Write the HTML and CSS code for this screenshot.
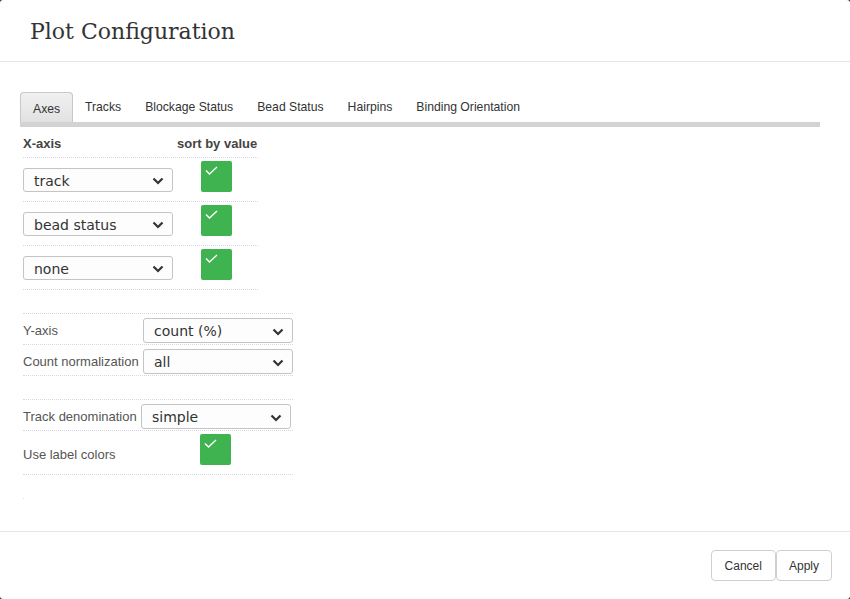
FILE: index.html
```html
<!DOCTYPE html>
<html>
<head>
<meta charset="utf-8">
<link rel="stylesheet" href="styles.css">
</head>
<body>
<div class="modal">
  <div class="modal-header"><h4 class="title">Plot Configuration</h4></div>
  <div class="modal-body">
    <div class="tabs">
      <div class="tab active">Axes</div>
      <div class="tab">Tracks</div>
      <div class="tab">Blockage Status</div>
      <div class="tab">Bead Status</div>
      <div class="tab">Hairpins</div>
      <div class="tab">Binding Orientation</div>
    </div>
    <div class="tabbar"></div>

    <div class="xtable">
      <div class="xrow head"><div class="c1">X-axis</div><div class="c2">sort by value</div></div>
      <div class="xrow">
        <div class="c1"><div class="select">track<svg class="chev" width="12" height="8" viewBox="0 0 12 8"><path d="M1.5 1.5 L6 6 L10.5 1.5" fill="none" stroke="#333" stroke-width="2.2"/></svg></div></div>
        <div class="c2 cbcell"><div class="cb"><svg width="14" height="9" viewBox="0 0 14 9"><path d="M1 4.5 L4.5 8 L12 1" fill="none" stroke="#fff" stroke-width="1.4"/></svg></div></div>
      </div>
      <div class="xrow">
        <div class="c1"><div class="select">bead status<svg class="chev" width="12" height="8" viewBox="0 0 12 8"><path d="M1.5 1.5 L6 6 L10.5 1.5" fill="none" stroke="#333" stroke-width="2.2"/></svg></div></div>
        <div class="c2 cbcell"><div class="cb"><svg width="14" height="9" viewBox="0 0 14 9"><path d="M1 4.5 L4.5 8 L12 1" fill="none" stroke="#fff" stroke-width="1.4"/></svg></div></div>
      </div>
      <div class="xrow">
        <div class="c1"><div class="select">none<svg class="chev" width="12" height="8" viewBox="0 0 12 8"><path d="M1.5 1.5 L6 6 L10.5 1.5" fill="none" stroke="#333" stroke-width="2.2"/></svg></div></div>
        <div class="c2 cbcell"><div class="cb"><svg width="14" height="9" viewBox="0 0 14 9"><path d="M1 4.5 L4.5 8 L12 1" fill="none" stroke="#fff" stroke-width="1.4"/></svg></div></div>
      </div>
    </div>

    <div class="ftable ytable">
      <div class="frow"><div class="lbl">Y-axis</div><div class="sc"><div class="select tall">count (%)<svg class="chev" width="12" height="8" viewBox="0 0 12 8"><path d="M1.5 1.5 L6 6 L10.5 1.5" fill="none" stroke="#333" stroke-width="2.2"/></svg></div></div></div>
      <div class="frow"><div class="lbl">Count normalization</div><div class="sc"><div class="select tall">all<svg class="chev" width="12" height="8" viewBox="0 0 12 8"><path d="M1.5 1.5 L6 6 L10.5 1.5" fill="none" stroke="#333" stroke-width="2.2"/></svg></div></div></div>
    </div>

    <div class="ftable ttable">
      <div class="frow"><div class="lbl">Track denomination</div><div class="sc"><div class="select tall">simple<svg class="chev" width="12" height="8" viewBox="0 0 12 8"><path d="M1.5 1.5 L6 6 L10.5 1.5" fill="none" stroke="#333" stroke-width="2.2"/></svg></div></div></div>
      <div class="frow cbrow"><div class="lbl">Use label colors</div><div class="sc cbcell"><div class="cb"><svg width="14" height="9" viewBox="0 0 14 9"><path d="M1 4.5 L4.5 8 L12 1" fill="none" stroke="#fff" stroke-width="1.4"/></svg></div></div></div>
    </div>
    <div class="dot"></div>
  </div>
  <div class="modal-footer">
    <button class="btn btn-cancel">Cancel</button><button class="btn btn-apply">Apply</button>
  </div>
</div>
</body>
</html>
```
FILE: styles.css
```css
html { background: #2b2b2b; }
body { margin: 0; font-family: "Liberation Sans", Arial, sans-serif; color: #333; }
.modal {
  width: 850px; height: 599px; background: #fff; border-radius: 3px;
  display: flex; flex-direction: column; box-sizing: border-box; overflow: hidden;
}
.modal-header { height: 61px; border-bottom: 1px solid #e5e5e5; flex: none; }
.title {
  margin: 0; padding: 19px 0 0 30px;
  font-family: "DejaVu Serif", serif; font-weight: normal; font-size: 22px; line-height: 26px;
  color: #333;
}
.modal-body { flex: 1; padding: 30px 30px 0 20px; }
.tabs { display: flex; height: 30px; align-items: stretch; }
.tab {
  padding: 0 12px; font-size: 12.2px; line-height: 30px; color: #333; box-sizing: border-box;
}
.tab.active {
  background: linear-gradient(#f0f0f0, #e2e2e2);
  border: 1px solid #c8c8c8; border-bottom: none; border-radius: 4px 4px 0 0;
  line-height: 30px; padding-top: 1px; width: 53px; padding-left: 12px;
}
.tabbar { height: 5px; background: #d3d3d3; width: 800px; }

.xtable { margin-left: 3px; width: 235px; }
.xrow {
  display: grid; grid-template-columns: 152px 83px; height: 44px; box-sizing: border-box;
  border-bottom: 1px dotted #d6d6e6; align-items: center;
}
.xrow.head { height: 31px; font-size: 13px; font-weight: bold; color: #444; padding-top: 2px; }
.xrow .c2 { padding-left: 2px; }
.cbcell { align-self: start; padding-top: 3px; display: flex; justify-content: center; }
.xrow .cbcell { padding-left: 0; padding-right: 1px; }

.select {
  position: relative; box-sizing: border-box; width: 150px; height: 24px; border: 1px solid #c4c4c4; border-radius: 3px;
  background: #fdfdfd; font-family: "DejaVu Sans", sans-serif; font-size: 14px; color: #333;
  line-height: 23px; padding-left: 10px; padding-top: 1px;
}
.select.tall { height: 25px; line-height: 23px; padding-top: 1px; }
.chev { position: absolute; right: 8px; top: 8px; }
.select.tall .chev { top: 9px; }

.cb { width: 31px; height: 31px; background: #3eb34f; border-radius: 2px; }
.cb svg { display: block; margin: 5px 0 0 4px; }

.ftable { margin-left: 3px; width: 270px; border-top: 1px dotted #d6d6e6; margin-top: 23px; }
.frow {
  display: flex; height: 31px; box-sizing: border-box; border-bottom: 1px dotted #d6d6e6;
}
.lbl { font-size: 13px; color: #555; align-self: center; padding-top: 2px; }
.ytable .lbl { width: 120px; }
.ttable .lbl { width: 118px; }
.sc { padding-top: 4px; }
.frow.cbrow { height: 44px; }
.frow.cbrow .lbl { padding-top: 4px; }
.frow .cbcell { width: 150px; padding-top: 3px; }
.frow .cbcell .cb { margin-right: 1px; }
.dot { width: 1px; height: 1px; background: #e0e0e0; margin: 23px 0 0 3px; }

.modal-footer {
  border-top: 1px solid #e5e5e5; height: 68px; display: flex; justify-content: flex-end;
  align-items: flex-start; padding: 18px 18px 0 0; box-sizing: border-box; flex: none;
}
.btn {
  font-family: "Liberation Sans", Arial, sans-serif; font-size: 12px; color: #333;
  background: #fff; border: 1px solid #cfcfcf; border-radius: 4px; height: 31px; padding: 0 13px;
}
.btn-apply { padding: 0 12px; }
```
